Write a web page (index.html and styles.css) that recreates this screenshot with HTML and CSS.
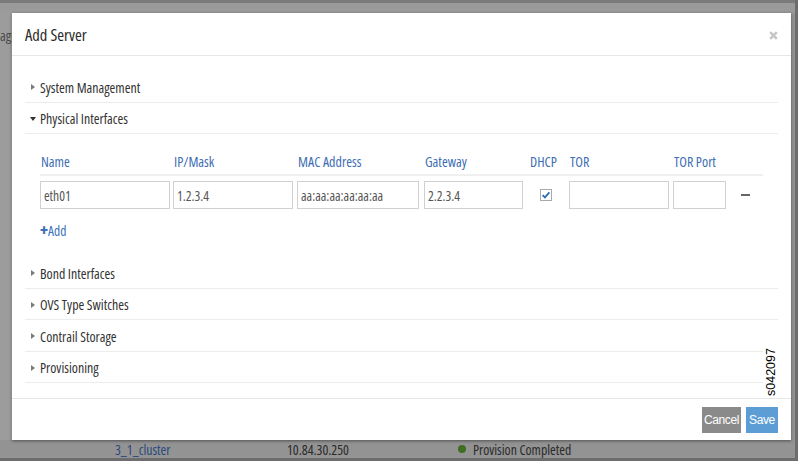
FILE: index.html
```html
<!DOCTYPE html>
<html>
<head>
<meta charset="utf-8">
<link rel="stylesheet" href="styles.css">
</head>
<body>
<div class="page">
  <div class="page-top"></div>
  <div class="page-mid">
    <div class="page-side"><span class="side-text">age</span></div>
  </div>
  <div class="page-bottom">
    <span class="cluster">3_1_cluster</span>
    <span class="ip">10.84.30.250</span>
    <span class="status"><i class="dot"></i>Provision Completed</span>
  </div>
</div>

<div class="modal">
  <div class="modal-header">
    <span class="title">Add Server</span>
    <svg class="close" width="9" height="9" viewBox="0 0 9 9"><path d="M1.2 1.2 L7.8 7.8 M7.8 1.2 L1.2 7.8" stroke="#c6c6c6" stroke-width="2.6"/></svg>
  </div>
  <div class="modal-body">
    <div class="section"><i class="tri right"></i>System Management</div>
    <div class="section open"><i class="tri down"></i>Physical Interfaces</div>
    <div class="iface">
      <div class="grid head">
        <span>Name</span><span>IP/Mask</span><span>MAC Address</span><span>Gateway</span><span>DHCP</span><span>TOR</span><span>TOR Port</span><span></span>
      </div>
      <div class="grid rowi">
        <div class="inp w130">eth01</div>
        <div class="inp w120">1.2.3.4</div>
        <div class="inp w122">aa:aa:aa:aa:aa:aa</div>
        <div class="inp w99">2.2.3.4</div>
        <div class="chk"><svg width="12" height="12" viewBox="0 0 12 12"><rect x="0.5" y="0.5" width="11" height="11" fill="#fff" stroke="#a9a9a9"/><path d="M2.6 6.2 L4.9 8.4 L9.4 3.4" fill="none" stroke="#2f6cb4" stroke-width="1.8"/></svg></div>
        <div class="inp w100"></div>
        <div class="inp w53"></div>
        <div class="minus"><i></i></div>
      </div>
      <div class="add"><b>+</b>Add</div>
    </div>
    <div class="section"><i class="tri right"></i>Bond Interfaces</div>
    <div class="section"><i class="tri right"></i>OVS Type Switches</div>
    <div class="section"><i class="tri right"></i>Contrail Storage</div>
    <div class="section"><i class="tri right"></i>Provisioning</div>
  </div>
  <div class="modal-footer">
    <button class="btn cancel">Cancel</button>
    <button class="btn save">Save</button>
  </div>
</div>
<div class="figid">s042097</div>
</body>
</html>
```
FILE: styles.css
```css
* { box-sizing: border-box; }
html, body { margin: 0; padding: 0; }
body {
  width: 798px;
  height: 461px;
  overflow: hidden;
  background: #6d6d6d;
  font-family: "Open Sans", "DejaVu Sans", sans-serif;
  font-stretch: 87.5%;
  position: relative;
}
.page {
  width: 795px;
  height: 458px;
  background: #939393;
  display: flex;
  flex-direction: column;
}
.page-top {
  height: 13px;
  border-top: 3px solid #7b7b7b;
  background: #9a9a9a;
}
.page-mid { flex: 1; display: flex; }
.page-side {
  width: 12px;
  background: #9c9c9c;
  border-right: 1px solid #a8a8a8;
  position: relative;
}
.side-text {
  position: absolute;
  left: 0;
  top: 13px;
  font-size: 14px;
  color: #4a4a4a;
}
.page-bottom {
  height: 18px;
  display: flex;
  align-items: center;
  font-size: 13.8px;
  color: #2a2a2a;
}
.cluster { margin-left: 115px; width: 172px; color: #2b4a7c; }
.ip { width: 171px; }
.status { display: flex; align-items: center; }
.dot {
  width: 8px; height: 8px; border-radius: 50%;
  background: #3e6d24; margin-right: 7px;
}

.modal {
  position: absolute;
  left: 12px;
  top: 13px;
  width: 779px;
  height: 427px;
  background: #fff;
  box-shadow: 0 1px 3px rgba(0,0,0,.45);
  display: flex;
  flex-direction: column;
}
.modal-header {
  height: 43px;
  border-bottom: 1px solid #e6e6e6;
  display: flex;
  align-items: center;
  justify-content: space-between;
  padding: 0 13px 0 13px;
}
.title { font-size: 16.5px; color: #2b2b2b; }
.close { display: block; margin-top: 2px; }
.modal-body {
  flex: 1;
  padding: 15px 13px 0 13px;
}
.section {
  height: 31.5px;
  border-bottom: 1px solid #ececec;
  display: flex;
  align-items: center;
  font-size: 13.9px;
  color: #333;
  padding: 2px 0 0 5px;
  white-space: nowrap;
}
.tri { display: inline-block; width: 0; height: 0; margin-right: 5px; }
.tri.right {
  border-top: 3px solid transparent;
  border-bottom: 3px solid transparent;
  border-left: 4px solid #7a7a7a;
  margin-left: 1px;
}
.tri.down {
  border-left: 3px solid transparent;
  border-right: 3px solid transparent;
  border-top: 4px solid #333;
  margin-right: 4px;
}
.iface { padding: 18px 0 0 15px; height: 123px; }
.grid {
  display: grid;
  grid-template-columns: 133px 124px 127px 105px 40px 104px 53px 37px;
  width: 723px;
  white-space: nowrap;
}
.head {
  font-size: 14px;
  color: #3d6db3;
  padding: 0 0 3px 1px;
  border-bottom: 2px solid #efefef;
}
.rowi { margin-top: 5px; align-items: center; height: 28px; }
.inp {
  height: 28px;
  border: 1px solid #d0d0d0;
  font-size: 13.6px;
  color: #555;
  padding-left: 3px;
  display: flex;
  align-items: center;
}
.w130 { width: 130px; }
.w120 { width: 120px; }
.w122 { width: 122px; }
.w99 { width: 99px; }
.w100 { width: 100px; }
.w53 { width: 53px; }
.chk { padding-left: 11px; display: flex; align-items: center; }
.chk svg { display: block; }
.minus { padding-left: 15px; }
.minus i { display: block; width: 9px; height: 2px; background: #666; }
.add {
  margin-top: 13px;
  font-size: 13.5px;
  color: #3b72b8;
}
.add b { font-size: 16px; font-weight: 800; line-height: 10px; }
.modal-footer {
  height: 42px;
  border-top: 1px solid #e6e6e6;
  display: flex;
  justify-content: flex-end;
  align-items: flex-start;
  padding: 8px 13px 0 0;
  gap: 5px;
}
.btn {
  height: 26px;
  border: none;
  padding: 0;
  font-family: "Liberation Sans", Arial, sans-serif;
  font-size: 12px;
  letter-spacing: -0.4px;
  color: #fff;
}
.cancel { width: 39px; background: #8a8a8a; }
.save { width: 32px; background: #5d9dd6; }
.figid {
  position: absolute;
  left: 763px;
  top: 347px;
  width: 16px;
  height: 50px;
  background: #fff;
  writing-mode: vertical-rl;
  transform: rotate(180deg);
  font-family: "Liberation Sans", Arial, sans-serif;
  font-size: 12.5px;
  color: #000;
  display: flex;
  align-items: center;
  justify-content: center;
}
```
